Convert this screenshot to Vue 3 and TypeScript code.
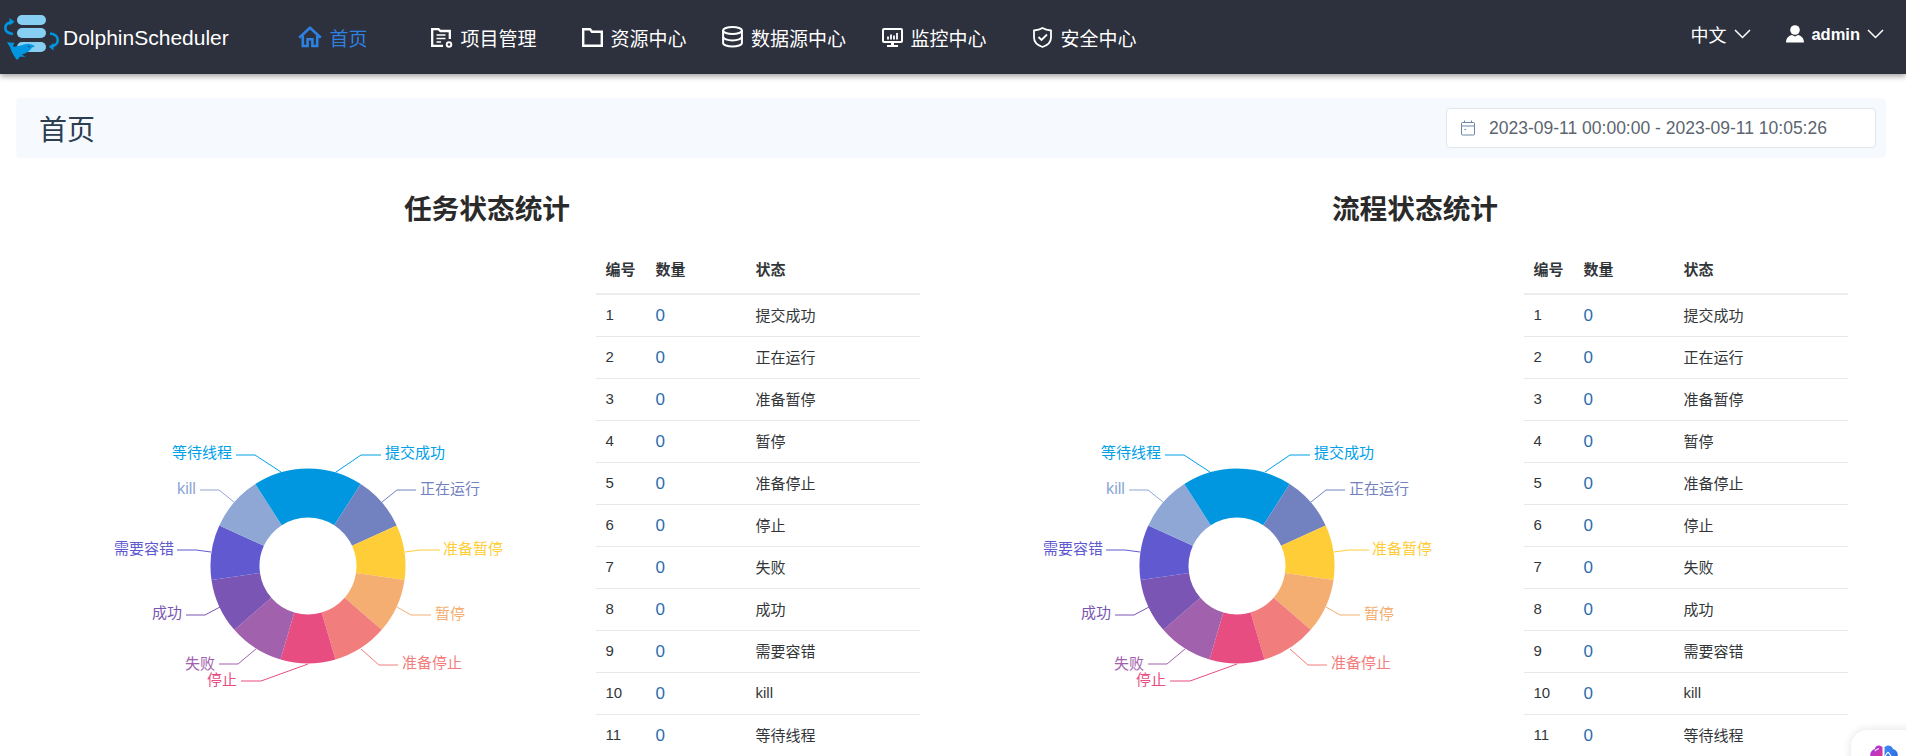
<script setup lang="ts">
const navItems = [
  { label: '首页', icon: 'home', active: true },
  { label: '项目管理', icon: 'project' },
  { label: '资源中心', icon: 'folder' },
  { label: '数据源中心', icon: 'db' },
  { label: '监控中心', icon: 'monitor' },
  { label: '安全中心', icon: 'shield' },
]

const states = [
  { name: '提交成功', color: '#0097e0', text: '#00a0e9', line: [[28, -94], [53, -111], [73, -111]], at: 77, y: -114 },
  { name: '正在运行', color: '#7281c0', text: '#7281c0', line: [[74, -64], [89, -76], [108, -76]], at: 112, y: -78 },
  { name: '准备暂停', color: '#ffcd38', text: '#ffcd38', line: [[97, -14], [112, -16], [132, -16]], at: 135, y: -18 },
  { name: '暂停', color: '#f4ae72', text: '#f4ae72', line: [[89, 41], [103, 49], [123, 49]], at: 127, y: 47 },
  { name: '准备停止', color: '#f27d7d', text: '#f27d7d', line: [[53, 83], [71, 99], [90, 99]], at: 94, y: 96 },
  { name: '停止', color: '#e84d82', text: '#e84d82', line: [[0, 98], [-47, 115], [-67, 115]], at: -71, y: 113 },
  { name: '失败', color: '#a261ad', text: '#a261ad', line: [[-52, 83], [-70, 98], [-89, 98]], at: -93, y: 97 },
  { name: '成功', color: '#7a55b4', text: '#7a55b4', line: [[-88, 41], [-103, 49], [-122, 49]], at: -126, y: 46 },
  { name: '需要容错', color: '#6059d0', text: '#6059d0', line: [[-97, -14], [-112, -16], [-131, -16]], at: -134, y: -18 },
  { name: 'kill', color: '#8ea7d5', text: '#8ea7d5', line: [[-74, -64], [-89, -76], [-108, -76]], at: -112, y: -78 },
  { name: '等待线程', color: '#0097e0', text: '#00a0e9', line: [[-27, -94], [-53, -111], [-72, -111]], at: -76, y: -114 },
]

const R = 97.5
const r = 48.5
const step = (Math.PI * 2) / states.length

function point(radius: number, angle: number) {
  return `${(Math.sin(angle) * radius).toFixed(2)} ${(-Math.cos(angle) * radius).toFixed(2)}`
}

function slicePath(i: number) {
  const a = i * step
  const b = (i + 1) * step
  return `M${point(r, a)}L${point(R, a)}A${R} ${R} 0 0 1 ${point(R, b)}L${point(r, b)}A${r} ${r} 0 0 0 ${point(r, a)}Z`
}

const panels = [
  { title: '任务状态统计' },
  { title: '流程状态统计' },
]
</script>

<template>
  <div class="page">
    <header class="nav">
      <div class="logo">
        <svg width="62" height="74" viewBox="0 0 62 74">
          <rect x="17" y="15" width="29" height="10" rx="5" fill="#86cff3" />
          <rect x="17" y="28" width="29" height="10" rx="5" fill="#86cff3" />
          <rect x="17" y="42" width="29" height="10" rx="5" fill="#86cff3" />
          <path d="M12.5 22C7.5 22.5 5.3 25 5.3 27.8C5.3 31 8 33.5 13 34" fill="none" stroke="#0097e0" stroke-width="2.6" />
          <path d="M9.5 18L14.5 21.8L9.5 25.5Z" fill="#0097e0" />
          <path d="M50 33.5C55 34 57.8 36.8 57.8 40C57.8 43.3 55 46 51 46.5" fill="none" stroke="#0097e0" stroke-width="2.6" />
          <path d="M53.5 43L48.8 46.7L53.5 50.5Z" fill="#0097e0" />
          <path d="M7 42C9.5 42.5 12 43 14.5 42.5C13.5 44 13 45.5 13.5 47C18 46 21 45.5 24 44.5C28 43 32 44 35 46.5L32 47.5C30 51 26 53.5 22 54.5C23 55.5 24.5 56 26 56C24 57 22 57 20 56.5L18 59.5L16.5 59.5C14 56 11 51 10 47C9 45.5 8 44 7 42Z" fill="#0097e0" />
          <circle cx="29" cy="46.5" r="0.8" fill="#2d303d" />
        </svg>
        <span class="brand">DolphinScheduler</span>
      </div>
      <nav class="menu">
        <div v-for="item in navItems" :key="item.label" class="menu-item" :class="{ active: item.active }">
          <svg class="menu-icon" width="24" height="24" viewBox="0 0 24 24" fill="none" stroke="currentColor" stroke-width="2">
            <template v-if="item.icon === 'home'">
              <path d="M1.2 12.8L12 2.8L22.8 12.8" stroke-width="2.7" />
              <path d="M4.8 10.5V21H9.6V14.2H14.4V21H19.2V10.5" stroke-width="2.6" />
            </template>
            <template v-else-if="item.icon === 'project'">
              <path d="M14 20.8H3.2V4.2H9.5L11.5 6H20.8V14" stroke-width="2.3" />
              <path d="M7.5 10H16.5M7.5 13.5H16.5M7.5 17H12" stroke-width="1.6" />
              <circle cx="20" cy="19.5" r="2.3" stroke-width="1.9" />
            </template>
            <template v-else-if="item.icon === 'folder'">
              <path d="M4.2 4.2H11L13 6.8H22.8V20.8H4.2Z" stroke-width="2.4" />
            </template>
            <template v-else-if="item.icon === 'db'">
              <ellipse cx="12.5" cy="5.5" rx="9.4" ry="3.6" stroke-width="2" />
              <path d="M3.1 5.5V18C3.1 20 7.5 21.6 12.5 21.6S21.9 20 21.9 18V5.5" stroke-width="2" />
              <path d="M3.1 11.8C3.1 13.8 7.5 15.4 12.5 15.4S21.9 13.8 21.9 11.8" stroke-width="2" />
            </template>
            <template v-else-if="item.icon === 'monitor'">
              <rect x="4" y="4" width="19" height="13" rx="1" stroke-width="2" />
              <path d="M9 14.5V11.5M12 14.5V9.5M15 14.5V10.5M18 14.5V8" stroke-width="1.8" />
              <path d="M13.5 17V20" stroke-width="3" />
              <path d="M8 21H19" stroke-width="2" />
            </template>
            <template v-else>
              <path d="M13.5 3C16 4.6 19 5.3 22 5.5V12.5C22 17 18 20.5 13.5 22C9 20.5 5 17 5 12.5V5.5C8 5.3 11 4.6 13.5 3Z" stroke-width="1.8" />
              <path d="M9.5 12L12.5 15L18 9.5" stroke-width="1.8" />
            </template>
          </svg>
          <span>{{ item.label }}</span>
        </div>
      </nav>
      <div class="right">
        <div class="lang">
          <span>中文</span>
          <svg width="17" height="10" viewBox="0 0 17 10" fill="none" stroke="#fff" stroke-width="1.5"><path d="M1 1L8.5 8.5L16 1" /></svg>
        </div>
        <div class="user">
          <svg width="18" height="18" viewBox="0 0 18 18" fill="#fff"><circle cx="9" cy="5" r="4.8" /><path d="M0 17.5C0 13 3 10.5 6 10L9 11.5L12 10C15 10.5 18 13 18 17.5Z" /></svg>
          <span>admin</span>
          <svg width="17" height="10" viewBox="0 0 17 10" fill="none" stroke="#fff" stroke-width="1.5"><path d="M1 1L8.5 8.5L16 1" /></svg>
        </div>
      </div>
    </header>

    <section class="title-bar">
      <h2>首页</h2>
      <div class="date-picker">
        <svg width="14" height="16" viewBox="0 0 14 16" fill="none" stroke="#6c87a3" stroke-width="1">
          <rect x="0.5" y="2.5" width="13" height="12.5" rx="1" />
          <path d="M0.5 6H13.5M3.5 0.5V3M10.5 0.5V3M3.5 9.5H5" />
        </svg>
        <span>2023-09-11 00:00:00 - 2023-09-11 10:05:26</span>
      </div>
    </section>

    <main class="panels">
      <section v-for="panel in panels" :key="panel.title" class="panel">
        <h3>{{ panel.title }}</h3>
        <div class="panel-body">
          <svg class="donut" width="573" height="516" viewBox="-285 -326 573 516">
            <path v-for="(s, i) in states" :key="s.name" :d="slicePath(i)" :fill="s.color" />
            <g v-for="s in states" :key="s.name + 'l'">
              <polyline :points="s.line.map((p) => p.join(',')).join(' ')" fill="none" :stroke="s.text" stroke-width="1" />
              <text
                :x="s.at"
                :y="s.y"
                :fill="s.text"
                :text-anchor="s.at > 0 ? 'start' : 'end'"
                dominant-baseline="central"
                :font-size="s.name === 'kill' ? 16.3 : 15"
              >{{ s.name }}</text>
            </g>
          </svg>
          <table class="stats">
            <colgroup>
              <col class="col-id" />
              <col class="col-count" />
              <col />
            </colgroup>
            <thead>
              <tr><th>编号</th><th>数量</th><th>状态</th></tr>
            </thead>
            <tbody>
              <tr v-for="(s, i) in states" :key="s.name">
                <td>{{ i + 1 }}</td>
                <td class="count">0</td>
                <td>{{ s.name }}</td>
              </tr>
            </tbody>
          </table>
        </div>
      </section>
    </main>

    <aside class="assistant">
      <svg width="30" height="26" viewBox="0 0 30 26">
        <defs>
          <linearGradient id="lobeL" x1="0" y1="0" x2="0.6" y2="1">
            <stop offset="0" stop-color="#9a3cf0" />
            <stop offset="1" stop-color="#ef2f7e" />
          </linearGradient>
          <linearGradient id="lobeR" x1="0" y1="0" x2="1" y2="1">
            <stop offset="0" stop-color="#3f8cf5" />
            <stop offset="1" stop-color="#2a62e0" />
          </linearGradient>
        </defs>
        <path d="M13.5 3C10 0 6 1.5 6 5C2 6 0 10 2 14C1 18 4 22 8 22L13.5 24Z" fill="url(#lobeL)" />
        <path d="M15.5 3C19 0 23 1.5 24 5C28 6 30 10 28 14C29 18 26 22 22 22L15.5 24Z" fill="url(#lobeR)" />
        <path d="M6 7C7 5.5 8.5 5 10 4.5M19 8L22 12M19 8L16 12" stroke="#fff" stroke-width="1.2" fill="none" />
      </svg>
    </aside>
  </div>
</template>

<style>
html,
body {
  margin: 0;
  overflow: hidden;
  background: #fff;
}
</style>

<style scoped>
.page {
  position: relative;
  height: 100vh;
  overflow: hidden;
  font-family: 'Liberation Sans', 'Noto Sans CJK SC', sans-serif;
  color: #333639;
}

.nav {
  display: flex;
  align-items: center;
  height: 74px;
  background: #2d303d;
  color: #fff;
  box-shadow: 0 2px 6px rgba(0, 0, 0, 0.4);
}

.logo {
  display: flex;
  align-items: center;
  width: 258px;
  flex-shrink: 0;
}

.logo svg {
  flex-shrink: 0;
  margin-right: 1px;
}

.brand {
  font-size: 21px;
  margin-top: 2px;
}

.menu {
  display: grid;
  grid-template-columns: repeat(6, 150px);
}

.menu-item {
  display: flex;
  align-items: center;
  justify-content: center;
  gap: 7px;
  font-size: 19px;
}

.menu-item.active {
  color: #2d81e0;
}

.menu-icon {
  flex-shrink: 0;
}

.right {
  display: flex;
  align-items: center;
  margin-left: auto;
  padding-right: 22px;
  margin-top: -6px;
}

.lang,
.user {
  display: flex;
  align-items: center;
}

.lang {
  gap: 8px;
  font-size: 18px;
  margin-right: 35px;
}

.user {
  gap: 7px;
  font-size: 16.5px;
  font-weight: 700;
}

.title-bar {
  display: flex;
  align-items: center;
  justify-content: space-between;
  height: 60px;
  margin: 24px 20px 0 16px;
  padding: 0 10px 0 23px;
  background: #f6fafe;
  border-radius: 4px;
}

.title-bar h2 {
  margin: 0;
  font-size: 28px;
  font-weight: 400;
  color: #2c3e50;
}

.date-picker {
  display: flex;
  align-items: center;
  gap: 14px;
  box-sizing: border-box;
  width: 430px;
  height: 40px;
  padding: 0 14px;
  background: #fff;
  border: 1px solid #e0e6ec;
  border-radius: 4px;
  font-size: 17.5px;
  color: #5b6570;
}

.panels {
  display: grid;
  grid-template-columns: 928px 928px;
  padding-left: 23px;
}

.panel h3 {
  margin: 0;
  height: 82px;
  line-height: 104px;
  text-align: center;
  font-size: 27.7px;
  font-weight: 700;
  color: #2a2a2a;
}

.panel-body {
  display: flex;
  align-items: flex-start;
}

.donut {
  flex-shrink: 0;
}

.panel:last-child .donut {
  margin-left: 1px;
  margin-right: -1px;
}

.stats {
  width: 324px;
  flex-shrink: 0;
  table-layout: fixed;
  border-collapse: separate;
  border-spacing: 0;
  font-size: 15px;
}

.col-id {
  width: 50px;
}

.col-count {
  width: 99px;
}

.stats th {
  box-sizing: border-box;
  height: 55px;
  padding: 3px 10px 0 9.5px;
  text-align: left;
  font-weight: 700;
  border-bottom: 2px solid #ececec;
}

.stats td {
  box-sizing: border-box;
  height: 42px;
  padding: 0 10px 2px 9.5px;
  border-bottom: 1px solid #e8e8e8;
}

.stats th:last-child,
.stats td:last-child {
  padding-left: 10.5px;
}

.stats td.count {
  padding-bottom: 0;
  font-size: 17px;
  color: #2d6db0;
}

.assistant {
  position: absolute;
  left: 1851px;
  top: 730px;
  width: 80px;
  height: 60px;
  background: #fff;
  border-radius: 16px;
  box-shadow: 0 0 10px rgba(0, 0, 0, 0.12);
  padding: 14px 0 0 18px;
  box-sizing: border-box;
}
</style>
